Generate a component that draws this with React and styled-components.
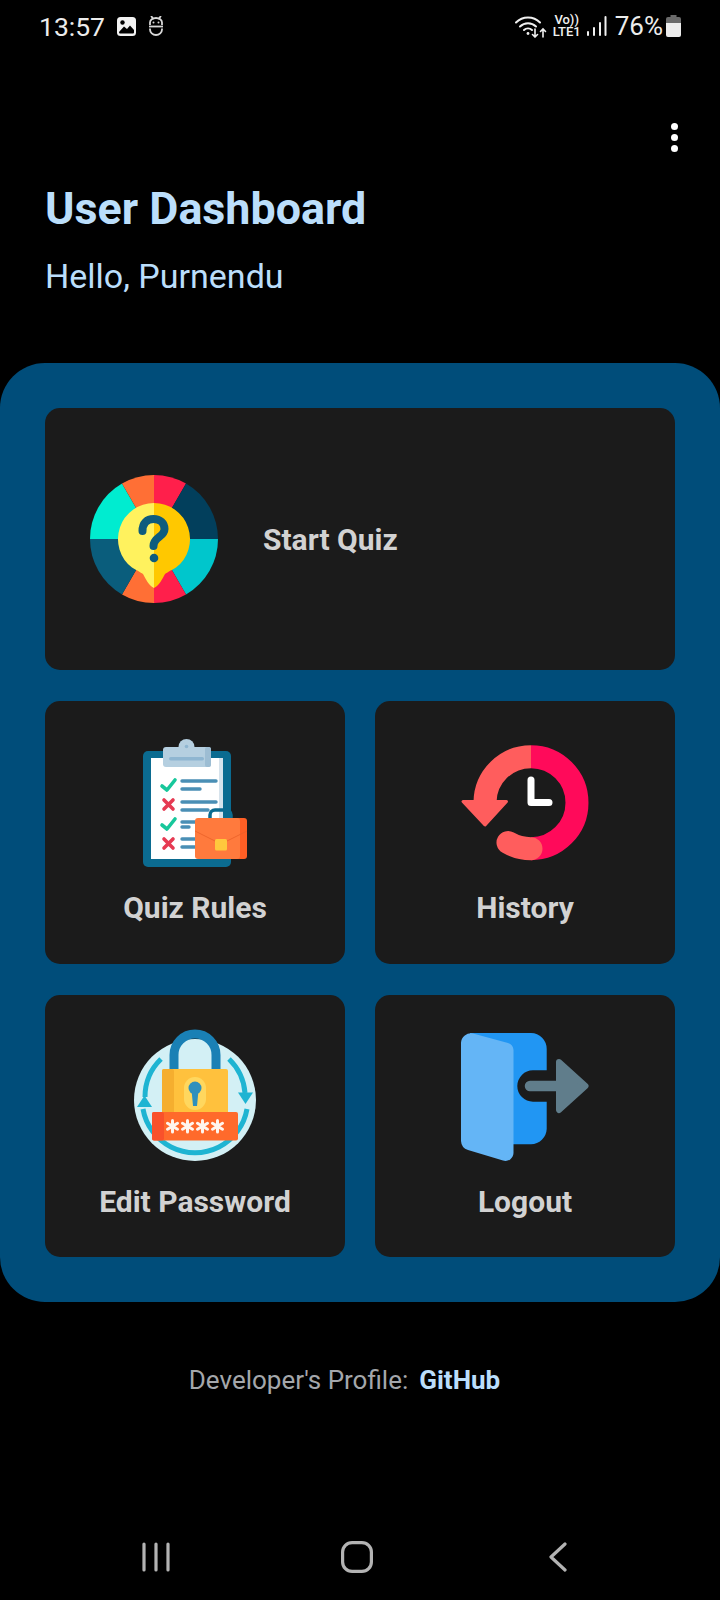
import styled, { createGlobalStyle } from "styled-components";

const GlobalStyle = createGlobalStyle`
  html, body {
    margin: 0;
    padding: 0;
    background: #000;
  }
  body {
    font-family: Roboto, "Liberation Sans", sans-serif;
  }
`;

const Screen = styled.div`
  width: 720px;
  height: 1600px;
  background: #000;
  display: flex;
  flex-direction: column;
  overflow: hidden;
`;

const StatusBar = styled.div`
  height: 52px;
  padding: 0 39px 0 39px;
  display: flex;
  align-items: center;
  justify-content: space-between;
  color: #ececec;
  font-size: 26.5px;
`;

const StatusGroup = styled.div`
  display: flex;
  align-items: center;
  gap: ${(p) => p.$gap || 0}px;
`;

const Percent = styled.span`
  font-size: 26px;
  margin: 0 -3px 0 2px;
`;

const Network = styled.div`
  display: flex;
  flex-direction: column;
  align-items: center;
  font-size: 13px;
  line-height: 12px;
  font-weight: 500;
  color: #f0f0f0;
`;

const MenuRow = styled.div`
  display: flex;
  justify-content: flex-end;
  padding: 71px 42px 0 0;
`;

const Dots = styled.div`
  display: flex;
  flex-direction: column;
  gap: 4px;
  span {
    width: 7px;
    height: 7px;
    border-radius: 50%;
    background: #fff;
  }
`;

const Header = styled.div`
  padding: 0 45px;
  margin-top: 33px;
`;

const Title = styled.h1`
  margin: 0;
  font-size: 44.8px;
  line-height: 48px;
  font-weight: 700;
  color: #bbdefb;
`;

const Greeting = styled.p`
  margin: 24px 0 0;
  font-size: 34px;
  line-height: 38px;
  color: #bbdefb;
`;

const Panel = styled.div`
  margin-top: 68px;
  height: 939px;
  box-sizing: border-box;
  padding: 45px;
  background: #004d7a;
  border-radius: 45px;
  display: grid;
  grid-template-columns: 1fr 1fr;
  grid-template-rows: repeat(3, 1fr);
  gap: 31px 30px;
`;

const Card = styled.div`
  background: #1b1b1b;
  border-radius: 15px;
  display: flex;
  flex-direction: ${(p) => (p.$wide ? "row" : "column")};
  align-items: center;
  gap: ${(p) => (p.$wide ? "45px" : "23px")};
  padding: ${(p) => (p.$wide ? "0 45px" : "38px 0 0")};
  grid-column: ${(p) => (p.$wide ? "span 2" : "auto")};
`;

const CardLabel = styled.span`
  font-size: 30px;
  line-height: 35px;
  font-weight: 700;
  color: #d2d2d2;
`;

const Icon = styled.svg`
  width: 128px;
  height: 128px;
  flex-shrink: 0;
  overflow: visible;
`;

const Footer = styled.div`
  margin-top: 63px;
  display: flex;
  justify-content: center;
  gap: 11px;
  padding-right: 31px;
  font-size: 26px;
  line-height: 30px;
  color: #a4a7ab;
`;

const GitLink = styled.a`
  font-weight: 700;
  color: #bbdefb;
  text-decoration: none;
`;

const NavBar = styled.div`
  margin-top: auto;
  height: 58px;
  margin-bottom: 14px;
  padding-left: 55px;
  display: grid;
  grid-template-columns: repeat(3, 201px);
  align-items: center;
  justify-items: center;
`;

const sector = (a0, a1, r = 64) => {
  const pt = (a) => {
    const t = (a * Math.PI) / 180;
    return `${(64 + r * Math.sin(t)).toFixed(2)} ${(64 - r * Math.cos(t)).toFixed(2)}`;
  };
  return `M64 64 L${pt(a0)} A${r} ${r} 0 0 1 ${pt(a1)} Z`;
};

const wedges = [
  [0, 30, "#ff1f4b"],
  [30, 90, "#023f5c"],
  [90, 150, "#00c6cc"],
  [150, 180, "#ff1f4b"],
  [180, 210, "#ff6f35"],
  [210, 270, "#0a5d7c"],
  [270, 330, "#00ecd0"],
  [330, 360, "#ff6f35"],
];

const QuizIcon = () => (
  <Icon viewBox="0 0 128 128">
    {wedges.map(([a, b, c]) => (
      <path key={a} d={sector(a, b)} fill={c} />
    ))}
    <path
      d="M64 28 A36 36 0 0 0 42 92.5 C48 96 50 97 53 99 C56 104 58 110 64 113 Z"
      fill="#fff25e"
    />
    <path
      d="M64 28 A36 36 0 0 1 86 92.5 C80 96 78 97 75 99 C72 104 70 110 64 113 Z"
      fill="#ffc800"
    />
    <path
      d="M52.5 56 C52.5 48 57 44 63.5 44 C70 44 74.5 48 74.5 54 C74.5 62 63.5 62 63.5 71"
      fill="none"
      stroke="#0d5c7e"
      strokeWidth="8"
      strokeLinecap="round"
    />
    <circle cx="64" cy="83" r="4.3" fill="#0d5c7e" />
  </Icon>
);

const Check = ({ x, y }) => (
  <path
    d={`M${x} ${y + 6} L${x + 5} ${y + 10} L${x + 13} ${y}`}
    fill="none"
    stroke="#17c79b"
    strokeWidth="3.6"
    strokeLinecap="round"
    strokeLinejoin="round"
  />
);

const Cross = ({ x, y }) => (
  <path
    d={`M${x} ${y} L${x + 9} ${y + 9} M${x + 9} ${y} L${x} ${y + 9}`}
    fill="none"
    stroke="#e63a52"
    strokeWidth="3.6"
    strokeLinecap="round"
  />
);

const ruleLines = [
  [42, 85],
  [50, 69],
  [63, 85],
  [71, 77],
  [83, 85],
  [88, 58],
  [100, 69],
  [108, 64],
];

const RulesIcon = () => (
  <Icon viewBox="0 0 128 128">
    <rect x="12" y="12" width="88" height="116" rx="5" fill="#0b6b90" />
    <rect x="20" y="19" width="72" height="101" fill="#fff" />
    <rect x="88" y="19" width="4" height="101" fill="#d7e3ec" />
    <circle cx="55.5" cy="8" r="8" fill="#b5cfe0" />
    <rect x="32" y="8" width="48" height="20" rx="3" fill="#b5cfe0" />
    <rect x="74" y="8" width="6" height="20" rx="2" fill="#9dbdd3" />
    <rect x="38" y="18" width="35" height="3.5" rx="1.7" fill="#8fb6d1" />
    <circle cx="55.5" cy="7.5" r="1.8" fill="#8fb6d1" />
    <Check x={31} y={41} />
    <Cross x={33} y={61} />
    <Check x={31} y={80} />
    <Cross x={33} y={100} />
    {ruleLines.map(([y, end]) => (
      <line
        key={y}
        x1="51"
        y1={y}
        x2={end}
        y2={y}
        stroke="#4a8fb5"
        strokeWidth="3.4"
        strokeLinecap="round"
      />
    ))}
    <rect x="79" y="71" width="21" height="14" rx="5" fill="none" stroke="#0b6b90" strokeWidth="3.5" />
    <rect x="72" y="79" width="44" height="41" rx="3" fill="#ff5f25" />
    <rect x="64" y="79" width="45" height="41" rx="3" fill="#ff7a3d" />
    <path d="M64 92 L90 105 L116 92" fill="none" stroke="#e85f28" strokeWidth="0.8" />
    <rect x="84" y="100" width="12" height="11.5" rx="1.5" fill="#ffc83d" />
  </Icon>
);

const HistoryIcon = () => (
  <Icon viewBox="0 0 128 128">
    <path d="M70 17.7 A46 46 0 0 1 70 109.7" fill="none" stroke="#ff0a5a" strokeWidth="23" />
    <path d="M70 17.7 A46 46 0 0 0 24 63" fill="none" stroke="#ff5d5d" strokeWidth="23" />
    <path d="M70 109.7 A46 46 0 0 1 47 103.5" fill="none" stroke="#ff5d5d" strokeWidth="23" strokeLinecap="round" />
    <path d="M2 62.5 H45.5 L24 86 Z" fill="#ff5d5d" stroke="#ff5d5d" strokeWidth="3" strokeLinejoin="round" />
    <path
      d="M70 41 V63.5 H88"
      fill="none"
      stroke="#fff"
      strokeWidth="7"
      strokeLinecap="round"
      strokeLinejoin="round"
    />
  </Icon>
);

const stars = [41.5, 56.5, 71.5, 86.5];

const LockIcon = () => (
  <Icon viewBox="0 0 128 128">
    <circle cx="64" cy="67" r="61" fill="#d3f0f5" />
    <path d="M30 26 A53 53 0 0 0 14 64" fill="none" stroke="#1eb4d2" strokeWidth="5" />
    <path d="M98 26 A53 53 0 0 1 114 60" fill="none" stroke="#1eb4d2" strokeWidth="5" />
    <path d="M12 76 A53 53 0 0 0 40 114 A53 53 0 0 0 88 114 A53 53 0 0 0 116 76" fill="none" stroke="#1eb4d2" strokeWidth="5" />
    <path d="M107 59.5 H122 L114.5 71 Z" fill="#1eb4d2" />
    <path d="M6 74 H21 L13.5 62.5 Z" fill="#1eb4d2" />
    <path d="M43 42 V22 A21 21 0 0 1 85 22 V42" fill="none" stroke="#1a80b5" strokeWidth="9" />
    <rect x="31" y="36" width="66" height="46" rx="2" fill="#ffc13d" />
    <rect x="31" y="36" width="12" height="46" rx="2" fill="#f5ae2f" />
    <rect x="53" y="44" width="22" height="33" rx="11" fill="#ffd75e" />
    <circle cx="64" cy="55" r="6.5" fill="#2f90bd" />
    <path d="M60.5 57 H67.5 L66 73 H62 Z" fill="#2f90bd" />
    <rect x="21" y="79" width="86" height="28.5" rx="2" fill="#ff6a2b" />
    <rect x="21" y="79" width="12" height="28.5" rx="2" fill="#f9512b" />
    {stars.map((x) => (
      <g key={x} stroke="#fff5ee" strokeWidth="3" strokeLinecap="round">
        <line x1={x} y1="87.5" x2={x} y2="99" />
        <line x1={x - 5} y1="90.3" x2={x + 5} y2="96.2" />
        <line x1={x + 5} y1="90.3" x2={x - 5} y2="96.2" />
      </g>
    ))}
  </Icon>
);

const LogoutIcon = () => (
  <Icon viewBox="0 0 128 128">
    <path
      d="M9 0 H70 A16 16 0 0 1 85.7 16 V37.3 H72 A15.7 15.7 0 0 0 72 68.7 H85.7 V96 A16 16 0 0 1 70 111.3 H9 Z"
      fill="#2196f3"
    />
    <path
      d="M0 10 A10 10 0 0 1 12 0.5 L47 10 A8 8 0 0 1 52.5 17 V120 A8 8 0 0 1 42 127.5 L7 117 A10 10 0 0 1 0 108 Z"
      fill="#64b5f6"
    />
    <path d="M69 53 H97" stroke="#607d8b" strokeWidth="10.5" strokeLinecap="round" />
    <path
      d="M98 29 L124.5 53 L98 77 Z"
      fill="#607d8b"
      stroke="#607d8b"
      strokeWidth="6"
      strokeLinejoin="round"
    />
  </Icon>
);

const GalleryIcon = () => (
  <svg width="19" height="19" viewBox="0 0 19 19">
    <rect width="19" height="19" rx="3.5" fill="#f2f2f2" />
    <circle cx="5.5" cy="5.5" r="2.2" fill="#000" />
    <path d="M2 15 L7 9.5 L10 12 L13 8.5 L17 13 V15.5 Q17 16.5 16 16.5 H3 Q2 16.5 2 15 Z" fill="#000" />
  </svg>
);

const BotIcon = () => (
  <svg width="16" height="20" viewBox="0 0 16 20" fill="none" stroke="#d8d8d8" strokeWidth="1.8">
    <path d="M3.5 0.5 L5 2.5 M12.5 0.5 L11 2.5" strokeLinecap="round" />
    <path d="M2 9 V6.5 A6 4.5 0 0 1 14 6.5 V9" />
    <path d="M1 10.5 H15" />
    <path d="M2 12.5 V13.5 A6 5.5 0 0 0 14 13.5 V12.5" />
    <circle cx="5.5" cy="6.5" r="1" fill="#d8d8d8" stroke="none" />
    <circle cx="10.5" cy="6.5" r="1" fill="#d8d8d8" stroke="none" />
  </svg>
);

const WifiIcon = () => (
  <svg width="32" height="23" viewBox="0 0 32 23" fill="none" stroke="#f0f0f0" strokeWidth="2" strokeLinecap="round">
    <path d="M1 7.5 A17 17 0 0 1 25 7.5" />
    <path d="M5 11.5 A11.5 11.5 0 0 1 21 11.5" />
    <path d="M9 15 A6 6 0 0 1 17 15" />
    <circle cx="13" cy="18.5" r="1.4" fill="#f0f0f0" stroke="none" />
    <path d="M20 14 V22 M17.5 19.5 L20 22 L22.5 19.5" strokeWidth="1.6" />
    <path d="M28 22 V14 M25.5 16.5 L28 14 L30.5 16.5" strokeWidth="1.6" />
  </svg>
);

const SignalIcon = () => (
  <svg width="20" height="20" viewBox="0 0 20 20" fill="#f0f0f0">
    <rect x="0" y="15" width="2" height="5" rx="1" />
    <rect x="6" y="11" width="2" height="9" rx="1" />
    <rect x="12" y="6" width="2" height="14" rx="1" />
    <rect x="17.5" y="0" width="2" height="20" rx="1" />
  </svg>
);

const BatteryIcon = () => (
  <svg width="15" height="22" viewBox="0 0 15 22">
    <path d="M4.5 0 H10.5 V2 H13 Q15 2 15 4 V8 H0 V4 Q0 2 2 2 H4.5 Z" fill="#6a6a6a" />
    <path d="M0 8 H15 V20 Q15 22 13 22 H2 Q0 22 0 20 Z" fill="#ececec" />
  </svg>
);

const RecentsIcon = () => (
  <svg width="28" height="30" viewBox="0 0 28 30" stroke="#b3b3b3" strokeWidth="3.2" strokeLinecap="round">
    <path d="M2 2 V28 M14 2 V28 M26 2 V28" />
  </svg>
);

const HomeIcon = () => (
  <svg width="32" height="32" viewBox="0 0 32 32" fill="none" stroke="#b3b3b3" strokeWidth="3.2">
    <rect x="1.6" y="1.6" width="28.8" height="28.8" rx="9.5" />
  </svg>
);

const BackIcon = () => (
  <svg width="18" height="30" viewBox="0 0 18 30" fill="none" stroke="#b3b3b3" strokeWidth="3.2" strokeLinecap="round" strokeLinejoin="round">
    <path d="M16 2 L2 15 L16 28" />
  </svg>
);

const App = () => {
  return (
    <Screen>
      <GlobalStyle />
      <StatusBar>
        <StatusGroup $gap={12}>
          <span>13:57</span>
          <GalleryIcon />
          <BotIcon />
        </StatusGroup>
        <StatusGroup $gap={6}>
          <WifiIcon />
          <Network>
            <span>Vo))</span>
            <span>LTE1</span>
          </Network>
          <SignalIcon />
          <Percent>76%</Percent>
          <BatteryIcon />
        </StatusGroup>
      </StatusBar>

      <MenuRow>
        <Dots>
          <span />
          <span />
          <span />
        </Dots>
      </MenuRow>

      <Header>
        <Title>User Dashboard</Title>
        <Greeting>Hello, Purnendu</Greeting>
      </Header>

      <Panel>
        <Card $wide>
          <QuizIcon />
          <CardLabel>Start Quiz</CardLabel>
        </Card>
        <Card>
          <RulesIcon />
          <CardLabel>Quiz Rules</CardLabel>
        </Card>
        <Card>
          <HistoryIcon />
          <CardLabel>History</CardLabel>
        </Card>
        <Card>
          <LockIcon />
          <CardLabel>Edit Password</CardLabel>
        </Card>
        <Card>
          <LogoutIcon />
          <CardLabel>Logout</CardLabel>
        </Card>
      </Panel>

      <Footer>
        <span>Developer's Profile:</span>
        <GitLink href="#">GitHub</GitLink>
      </Footer>

      <NavBar>
        <RecentsIcon />
        <HomeIcon />
        <BackIcon />
      </NavBar>
    </Screen>
  );
};

export default App;
